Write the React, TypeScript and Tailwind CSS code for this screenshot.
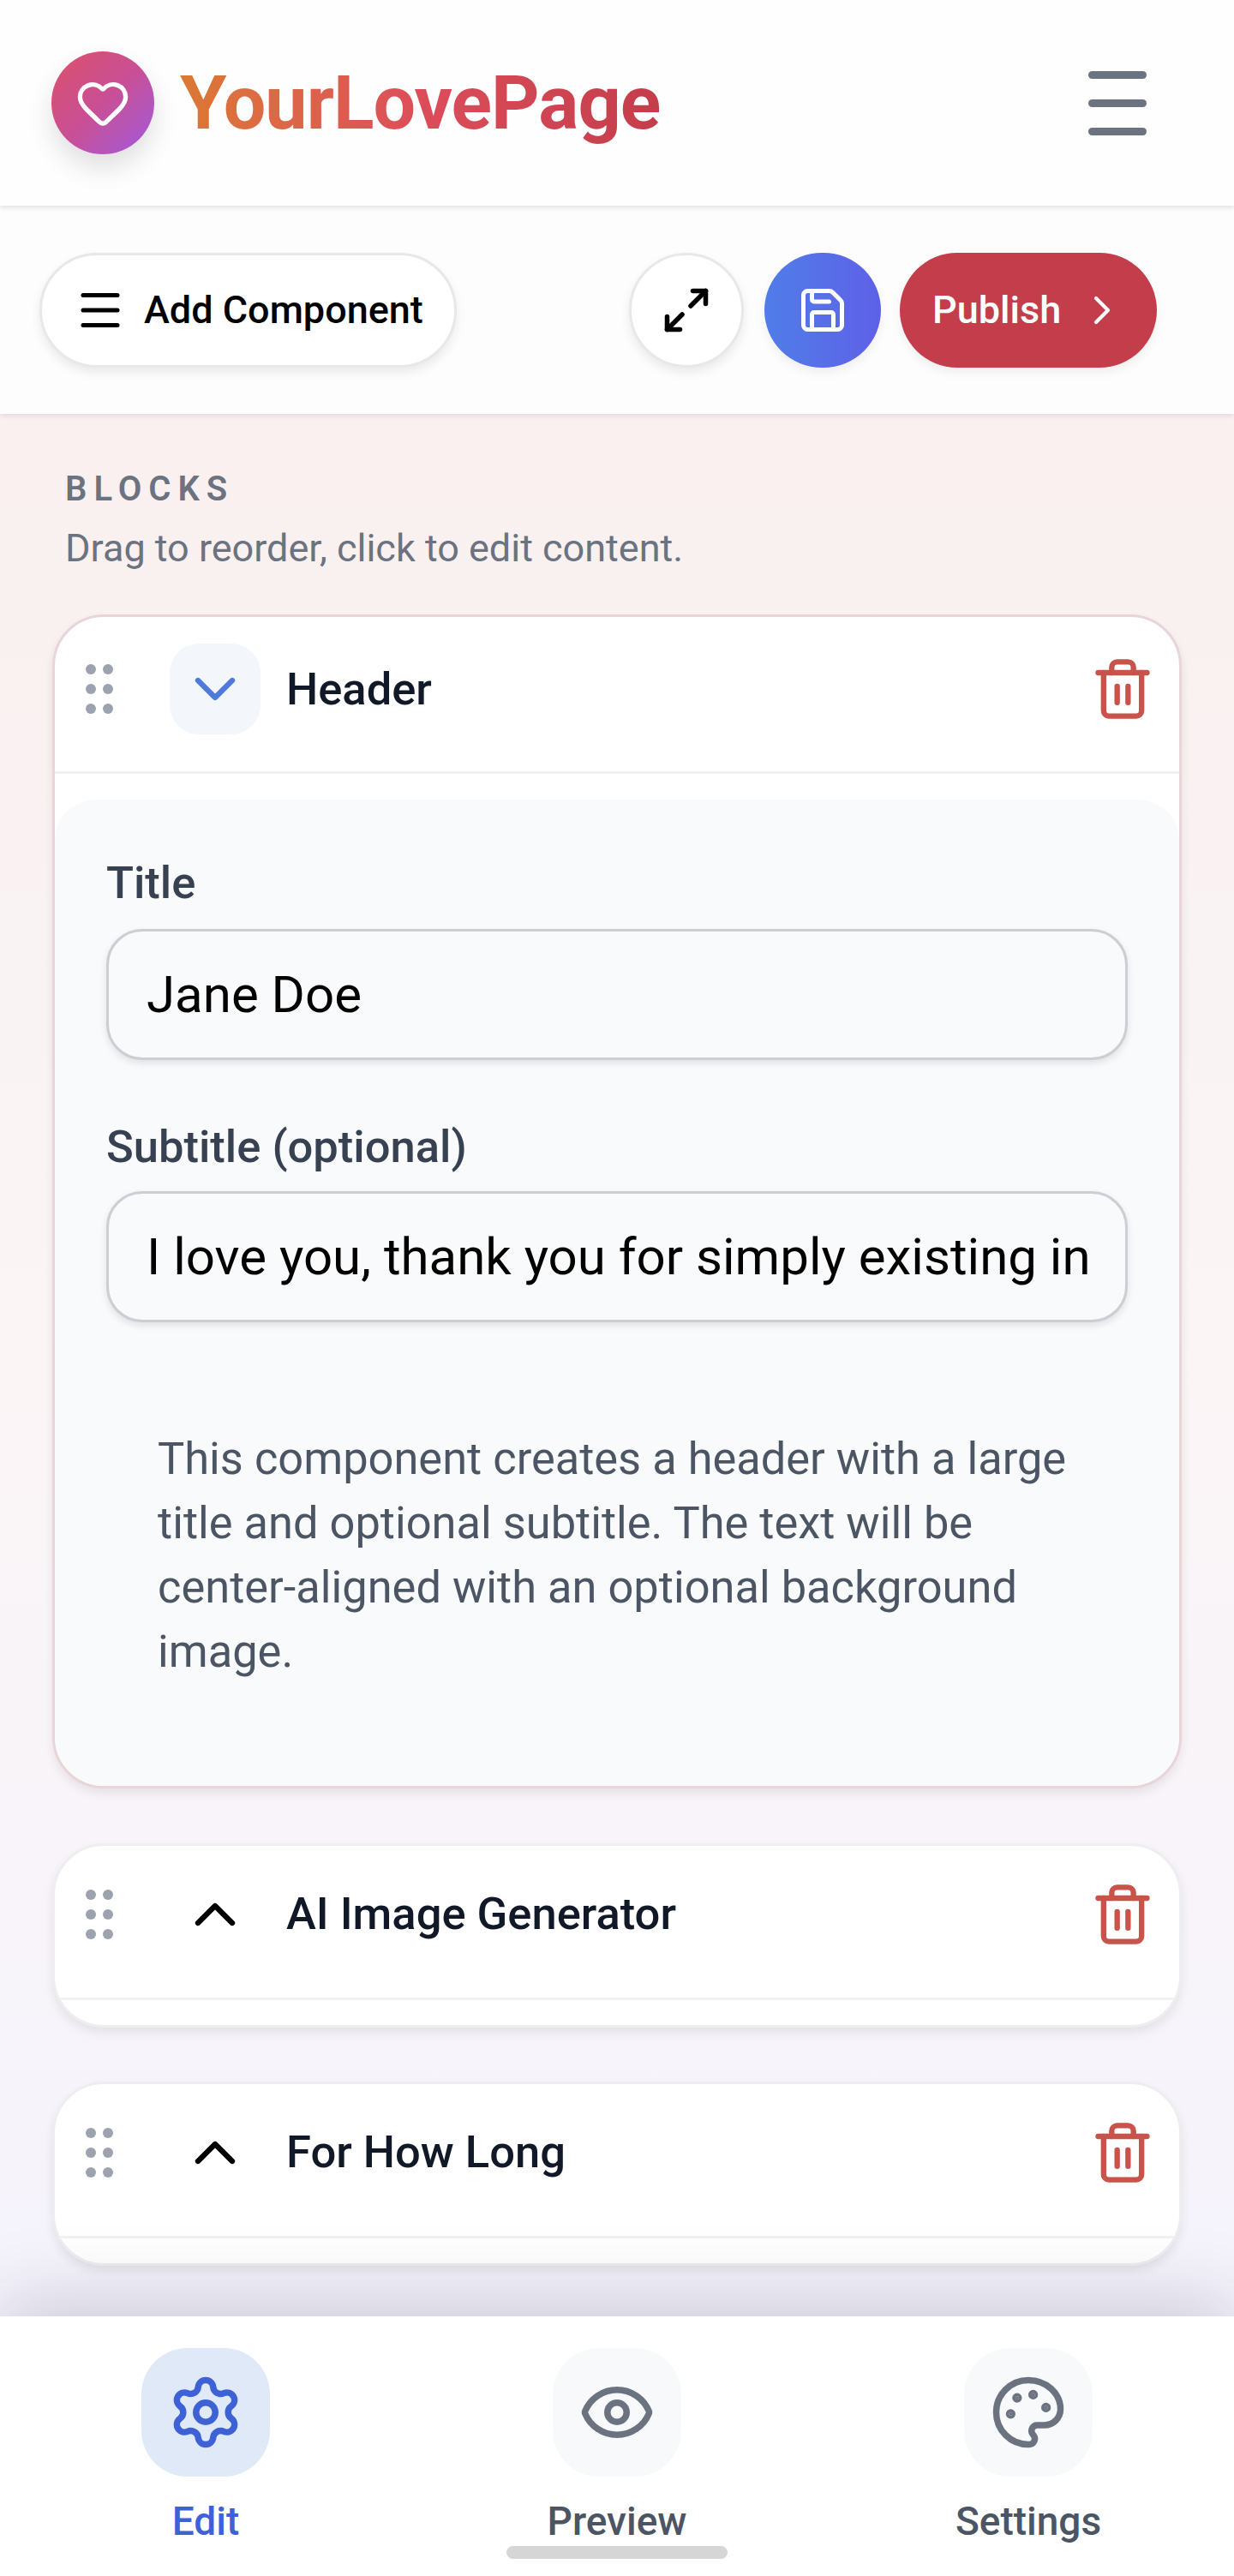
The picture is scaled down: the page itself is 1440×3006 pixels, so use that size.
import { ChevronDown, ChevronRight, ChevronUp, Eye, Heart, Maximize2, Menu, Palette, Save, Settings, Trash2 } from "lucide-react";

function Grip() {
  return (
    <svg viewBox="0 0 32 58" className="ml-[36px] h-[58px] w-[32px] shrink-0 fill-[#9ca3af]">
      <circle cx="6" cy="6" r="6" />
      <circle cx="26" cy="6" r="6" />
      <circle cx="6" cy="29" r="6" />
      <circle cx="26" cy="29" r="6" />
      <circle cx="6" cy="52" r="6" />
      <circle cx="26" cy="52" r="6" />
    </svg>
  );
}

function BlockRow({ title, open }: { title: string; open?: boolean }) {
  return (
    <div
      className={
        open
          ? "flex h-[183px] items-center border-b-[3px] border-[#f1f1f3] pb-[12px]"
          : "flex h-[180px] items-center border-b-[3px] border-[#f1f1f3] pb-[18px]"
      }
    >
      <Grip />
      <div
        className={
          open
            ? "ml-[66px] flex h-[106px] w-[106px] items-center justify-center rounded-[34px] bg-[#f3f6fb]"
            : "ml-[66px] flex h-[106px] w-[106px] items-center justify-center rounded-[34px]"
        }
      >
        {open ? (
          <ChevronDown className="h-[80px] w-[80px] text-[#4f7adb]" strokeWidth={1.9} />
        ) : (
          <ChevronUp className="h-[80px] w-[80px] text-black" strokeWidth={1.9} />
        )}
      </div>
      <span className="ml-[30px] flex-1 text-[52.5px] font-medium text-[#111827]">{title}</span>
      <Trash2 className="mr-[28px] h-[76px] w-[76px] text-[#c8534a]" strokeWidth={2} />
    </div>
  );
}

function NavItem({ label, active, children }: { label: string; active?: boolean; children: React.ReactNode }) {
  return (
    <div className="flex flex-col items-center">
      <div
        className={
          active
            ? "flex h-[150px] w-[150px] items-center justify-center rounded-[54px] bg-[#dfe9f8] text-[#3e62d6]"
            : "flex h-[150px] w-[150px] items-center justify-center rounded-[54px] bg-[#f8f9fb] text-[#6b7280]"
        }
      >
        {children}
      </div>
      <span
        className={
          active
            ? "mt-[20px] text-[46px] leading-[64px] font-medium text-[#3e62d6]"
            : "mt-[20px] text-[46px] leading-[64px] font-medium text-[#4b5563]"
        }
      >
        {label}
      </span>
    </div>
  );
}

export default function App() {
  return (
    <div className="relative flex h-[3006px] w-full flex-col overflow-hidden bg-white font-['Roboto',sans-serif]">
      {/* top bar */}
      <header className="relative z-20 flex h-[240px] shrink-0 items-center justify-between bg-[#fefefe] pr-[102px] pl-[60px] shadow-[0_2px_6px_rgba(0,0,0,0.12)]">
        <div className="flex items-center gap-[30px]">
          <div className="flex h-[120px] w-[120px] items-center justify-center rounded-full bg-gradient-to-br from-[#dc4f68] via-[#c94f95] to-[#a055e0] shadow-[0_16px_30px_rgba(0,0,0,0.12)]">
            <Heart className="h-[64px] w-[64px] text-white" strokeWidth={2} />
          </div>
          <span className="bg-gradient-to-r from-[#dc7832] via-[#dc4d5a] to-[#c43d4b] bg-clip-text text-[88px] font-bold tracking-[-1px] text-transparent">
            YourLovePage
          </span>
        </div>
        <div className="flex w-[68px] flex-col gap-[24px]">
          <div className="h-[9px] rounded-full bg-[#6b7280]" />
          <div className="h-[9px] rounded-full bg-[#6b7280]" />
          <div className="h-[9px] rounded-full bg-[#6b7280]" />
        </div>
      </header>

      {/* toolbar */}
      <div className="relative z-10 flex h-[243px] shrink-0 items-center bg-[#fdfdfd] pr-[90px] pl-[46px] shadow-[0_2px_6px_rgba(0,0,0,0.1)]">
        <button className="flex h-[134px] w-[487px] items-center rounded-full border-[3px] border-[#e8e8ea] bg-white pl-[38px] shadow-[0_6px_12px_rgba(0,0,0,0.08)]">
          <Menu className="h-[60px] w-[60px] text-black" strokeWidth={2} />
          <span className="ml-[21px] text-[45px] font-medium text-black">Add Component</span>
        </button>
        <button className="ml-auto flex h-[134px] w-[134px] items-center justify-center rounded-full border-[3px] border-[#e8e8ea] bg-white shadow-[0_6px_12px_rgba(0,0,0,0.08)]">
          <Maximize2 className="h-[60px] w-[60px] text-black" strokeWidth={2.2} />
        </button>
        <button className="ml-[24px] flex h-[134px] w-[136px] items-center justify-center rounded-full bg-gradient-to-r from-[#4f7de8] to-[#5e60e8] shadow-[0_6px_12px_rgba(0,0,0,0.06)]">
          <Save className="h-[60px] w-[60px] text-white" strokeWidth={2} />
        </button>
        <button className="ml-[22px] flex h-[134px] w-[300px] items-center rounded-full bg-[#c43d4b] pl-[38px] shadow-[0_6px_12px_rgba(0,0,0,0.06)]">
          <span className="text-[45px] font-medium text-white">Publish</span>
          <ChevronRight className="ml-[20px] h-[56px] w-[56px] text-white" strokeWidth={1.8} />
        </button>
      </div>

      {/* blocks */}
      <main className="flex-1 overflow-hidden bg-gradient-to-b from-[#f9f0ef] via-[#fbf5f6] to-[#f5f3fc] px-[61px] pt-[63px]">
        <div className="px-[15px]">
          <div className="text-[40px] leading-[50px] font-semibold tracking-[0.2em] text-[#6b7280]">BLOCKS</div>
          <p className="mt-[14px] text-[45px] leading-[60px] text-[#6b7280]">Drag to reorder, click to edit content.</p>
        </div>

        <section className="mt-[47px] h-[1370px] overflow-hidden rounded-[60px] border-[3px] border-[#e8d5d8] bg-white shadow-[0_6px_12px_rgba(0,0,0,0.08)]">
          <BlockRow title="Header" open />
          <div className="mt-[30px] h-[1151px] rounded-t-[48px] bg-[#f9fafc] px-[60px] pt-[65px]">
            <label className="block text-[52.5px] leading-[64px] font-medium text-[#374151]">Title</label>
            <div className="mt-[22px] flex h-[153px] items-center rounded-[42px] border-[3px] border-[#cbced3] bg-[#f9fafc] px-[44px] text-[60px] text-black shadow-[0_4px_8px_rgba(0,0,0,0.1)]">
              Jane Doe
            </div>
            <label className="mt-[69px] block text-[52.5px] leading-[64px] font-medium text-[#374151]">Subtitle (optional)</label>
            <div className="mt-[20px] flex h-[153px] items-center overflow-hidden rounded-[42px] border-[3px] border-[#cbced3] bg-[#f9fafc] px-[44px] text-[60px] whitespace-nowrap text-black shadow-[0_4px_8px_rgba(0,0,0,0.1)]">
              I love you, thank you for simply existing in
            </div>
            <p className="mt-[122px] pr-[50px] pl-[60px] text-[52.4px] leading-[75px] text-[#4b5563]">
              This component creates a header with a large title and optional subtitle. The text will be center-aligned with an optional background image.
            </p>
          </div>
        </section>

        <section className="mt-[64px] h-[215px] overflow-hidden rounded-[60px] border-[3px] border-[#eeeef1] bg-white shadow-[0_6px_12px_rgba(0,0,0,0.08)]">
          <BlockRow title="AI Image Generator" />
        </section>

        <section className="mt-[63px] h-[215px] overflow-hidden rounded-[60px] border-[3px] border-[#eeeef1] bg-white shadow-[0_6px_12px_rgba(0,0,0,0.08)]">
          <BlockRow title="For How Long" />
        </section>
      </main>

      {/* bottom nav */}
      <nav className="relative z-20 grid h-[303px] shrink-0 grid-cols-3 bg-white pt-[37px] shadow-[0_-8px_90px_rgba(30,30,60,0.22)]">
        <NavItem label="Edit" active>
          <Settings className="h-[90px] w-[90px]" strokeWidth={2} />
        </NavItem>
        <NavItem label="Preview">
          <Eye className="h-[90px] w-[90px]" strokeWidth={2} />
        </NavItem>
        <NavItem label="Settings">
          <Palette className="h-[90px] w-[90px]" strokeWidth={2} />
        </NavItem>
        <div className="absolute bottom-[20px] left-1/2 h-[15px] w-[258px] -translate-x-1/2 rounded-full bg-[#d6d6d6]" />
      </nav>
    </div>
  );
}
